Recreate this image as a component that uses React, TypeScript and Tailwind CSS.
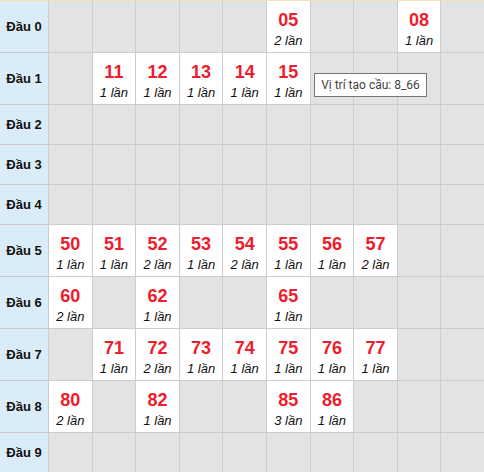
import React from "react";

const data: Record<number, Record<number, number>> = {
  0: { 5: 2, 8: 1 },
  1: { 1: 1, 2: 1, 3: 1, 4: 1, 5: 1 },
  2: {},
  3: {},
  4: {},
  5: { 0: 1, 1: 1, 2: 2, 3: 1, 4: 2, 5: 1, 6: 1, 7: 2 },
  6: { 0: 2, 2: 1, 5: 1 },
  7: { 1: 1, 2: 2, 3: 1, 4: 1, 5: 1, 6: 1, 7: 1 },
  8: { 0: 2, 2: 1, 5: 3, 6: 1 },
  9: {},
};

export default function App() {
  const rows = Array.from({ length: 10 }, (_, r) => r);
  return (
    <div
      className="relative w-[484px] h-[472px] overflow-hidden bg-white"
      style={{ fontFamily: '"Liberation Sans", Arial, sans-serif' }}
    >
      <div className="grid grid-cols-[48px_repeat(10,minmax(0,1fr))] grid-rows-[51px_51px_39px_39px_39px_51px_51px_51px_51px_39px] gap-px bg-[#cdcdcd] border-t border-[#f2e2b6]">
        {rows.map((r) => (
          <React.Fragment key={r}>
            <div className="bg-[#d9ecf7] flex items-center justify-center text-[13px] font-bold text-[#111] leading-none">
              Đầu {r}
            </div>
            {Array.from({ length: 10 }, (_, c) => {
              const cnt = data[r][c];
              if (cnt === undefined) {
                return <div key={c} className="bg-[#e2e3e5]" />;
              }
              return (
                <div key={c} className="bg-white flex flex-col items-center pt-[9px]">
                  <div className="text-[18px] leading-[20px] font-bold text-[#ee1c2c]">
                    {r}
                    {c}
                  </div>
                  <div className="text-[13px] leading-[22px] italic text-[#111]">
                    {cnt} lần
                  </div>
                </div>
              );
            })}
          </React.Fragment>
        ))}
      </div>
      <div
        className="absolute left-[314px] top-[73px] w-[113px] h-[24px] border border-[#767676] bg-white flex items-center justify-center text-[12px] text-[#3f3f3f]"
        style={{ fontFamily: 'Roboto, "Noto Sans", sans-serif' }}
      >
        Vị trí tạo cầu: 8_66
      </div>
    </div>
  );
}
